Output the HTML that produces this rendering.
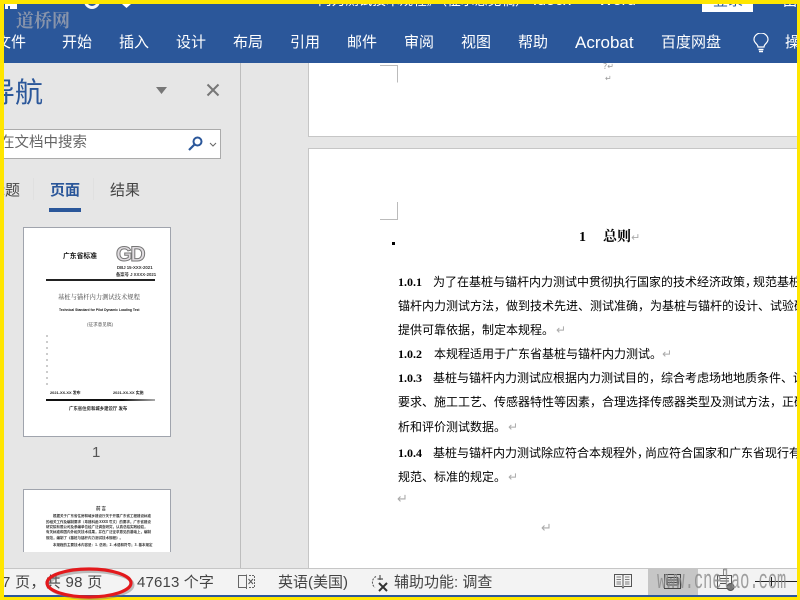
<!DOCTYPE html>
<html><head><meta charset="utf-8">
<style>
html,body{margin:0;padding:0;width:800px;height:600px;overflow:hidden;background:#fff}
#r{position:relative;width:800px;height:600px;overflow:hidden;font-family:"Liberation Sans","Noto Sans CJK SC",sans-serif}
#r div{position:absolute;white-space:nowrap}
.tab{color:#fff;font-size:15px;top:34px;line-height:18px}
.d{font-family:"Liberation Serif","WenQuanYi Zen Hei","Noto Sans CJK SC",sans-serif;font-size:12px;line-height:16px;color:#000;left:398px}
.d b{font-family:"Liberation Serif",serif;font-size:12px}
.n{letter-spacing:-4px}
.pm{color:#aaa;font-size:12px;font-family:"DejaVu Sans",sans-serif}
.st{font-size:15px;color:#444;top:574px;line-height:18px}
.l2 div{left:22px;font-size:3.500px;line-height:6px;font-weight:bold;color:#333}
.mk{left:22px;width:2px;height:2px;background:#ccc}
</style></head><body><div id="r">
<!-- ribbon -->
<div style="left:0;top:0;width:800px;height:63px;background:#2b579a"></div>
<!-- panels -->
<div style="left:0;top:63px;width:309px;height:506px;background:#e6e6e6"></div>
<div style="left:240px;top:63px;width:1px;height:506px;background:#bdbdbd"></div>
<div style="left:308px;top:63px;width:1px;height:74px;background:#c6c6c6"></div>
<div style="left:308px;top:136px;width:492px;height:1px;background:#c6c6c6"></div>
<div style="left:308px;top:137px;width:492px;height:12px;background:#e6e6e6"></div>
<div style="left:308px;top:148px;width:492px;height:1px;background:#c6c6c6"></div>
<div style="left:308px;top:148px;width:1px;height:421px;background:#c6c6c6"></div>

<!-- title bar -->
<div style="left:5px;top:4px;width:12px;height:5px;background:#fff"></div>
<div style="left:8px;top:6px;width:2px;height:3px;background:#2b579a"></div>
<div style="left:84px;top:-7px;width:10px;height:10px;border:3px solid #fff;border-radius:50%;opacity:.95"></div>
<svg style="position:absolute;left:122px;top:4px" width="10" height="5"><path d="M0 0H9L4.500 4Z" fill="#fff"/></svg>
<div style="left:318px;top:-8px;color:#fff;font-size:13.600px;line-height:18px">内力测试技术规程》（征求意见稿）<span style="margin-left:4px;font-size:16px">.docx</span><span style="margin-left:27px;font-size:16px">Word</span></div>
<div style="left:702px;top:0;width:51px;height:12px;background:#fff;overflow:hidden"><div style="left:11px;top:-8px;color:#2b579a;font-size:15px;line-height:18px">登录</div></div>
<div style="left:783px;top:-8px;color:#fff;font-size:14px;line-height:18px">田</div>
<div style="left:16px;top:8px;font-family:'Noto Serif CJK SC',serif;font-weight:bold;font-size:18px;line-height:24px;color:#8894ab">道桥网</div>

<!-- tabs -->
<div class="tab" style="left:-4px">文件</div>
<div class="tab" style="left:62px">开始</div>
<div class="tab" style="left:119px">插入</div>
<div class="tab" style="left:176px">设计</div>
<div class="tab" style="left:233px">布局</div>
<div class="tab" style="left:290px">引用</div>
<div class="tab" style="left:347px">邮件</div>
<div class="tab" style="left:404px">审阅</div>
<div class="tab" style="left:461px">视图</div>
<div class="tab" style="left:518px">帮助</div>
<div class="tab" style="left:575px;font-size:17px">Acrobat</div>
<div class="tab" style="left:661px">百度网盘</div>
<svg style="position:absolute;left:752px;top:33px" width="18" height="22" fill="none" stroke="#fff" stroke-width="1.200"><path d="M6 14C6 11 2 10 2 6.500A6.800 6.300 0 0 1 16 6.500C16 10 12 11 12 14Z"/><path d="M6.500 16.500H11.500M7 18.500H11" stroke-width="1.400"/></svg>
<div class="tab" style="left:785px">操作</div>

<!-- nav pane -->
<div style="left:-13px;top:77px;font-size:28px;line-height:32px;color:#2b579a">导航</div>
<svg style="position:absolute;left:155px;top:87px" width="13" height="8"><path d="M1 0H12L6.500 7Z" fill="#777"/></svg>
<svg style="position:absolute;left:206px;top:83px" width="14" height="14" stroke="#777" stroke-width="2"><path d="M1.500 1.500L12.500 12.500M12.500 1.500L1.500 12.500"/></svg>
<div style="left:0;top:129px;width:219px;height:28px;background:#fff;border:1px solid #ababab"></div>
<div style="left:0;top:133px;font-size:14.500px;line-height:20px;color:#666">在文档中搜索</div>
<svg style="position:absolute;left:187px;top:135px" width="17" height="17" fill="none" stroke="#2b579a"><circle cx="10.500" cy="6.500" r="4" stroke-width="2"/><path d="M7.500 9.500L2 15" stroke-width="2.200"/></svg>
<svg style="position:absolute;left:209px;top:142px" width="8" height="5" fill="none" stroke="#666"><path d="M1 1L4 4L7 1"/></svg>
<div style="left:-10px;top:182px;font-size:15px;line-height:18px;color:#444">标题</div>
<div style="left:50px;top:182px;font-size:15px;line-height:18px;color:#2b579a;font-weight:bold">页面</div>
<div style="left:110px;top:182px;font-size:15px;line-height:18px;color:#444">结果</div>
<div style="left:49px;top:208px;width:32px;height:4px;background:#2b579a"></div>
<div style="left:33px;top:178px;width:1px;height:22px;background:#e0e0e0"></div>
<div style="left:93px;top:178px;width:1px;height:22px;background:#e0e0e0"></div>

<!-- thumbnail 1 -->
<div style="left:23px;top:227px;width:146px;height:208px;background:#fff;border:1px solid #a0a4ad;overflow:hidden">
 <div style="left:0;top:0;width:146px;height:208px;filter:blur(.35px)">
  <div style="left:39px;top:22px;font-size:6.800px;line-height:10px;color:#111;font-weight:bold;font-family:'Noto Sans CJK SC',sans-serif">广东省标准</div>
  <div style="left:92px;top:15px;font-size:21px;line-height:24px;font-weight:bold;color:#e0dce0;-webkit-text-stroke:1px #777;letter-spacing:-2px">GD</div>
  <div style="left:93px;top:37px;font-size:4.300px;line-height:6px;color:#333;font-weight:bold">DBJ 15-XXX-2021</div>
  <div style="left:92px;top:44px;font-size:4.300px;line-height:6px;color:#333;font-weight:bold">备案号 J XXXX-2021</div>
  <div style="left:22px;top:51px;width:109px;height:2px;background:#222"></div>
  <div style="left:34px;top:64px;font-size:6.300px;line-height:10px;color:#444;font-family:'Noto Serif CJK SC',serif">基桩与锚杆内力测试技术规程</div>
  <div style="left:35px;top:79px;font-size:3.350px;line-height:7px;color:#111;font-weight:bold">Technical Standard for Pilot Dynamic Loading Test</div>
  <div style="left:63px;top:93px;font-size:4.600px;line-height:8px;color:#555">(征求意见稿)</div>
  <div class="mk" style="top:107px"></div><div class="mk" style="top:113px"></div><div class="mk" style="top:119px"></div><div class="mk" style="top:125px"></div><div class="mk" style="top:131px"></div><div class="mk" style="top:137px"></div><div class="mk" style="top:143px"></div><div class="mk" style="top:149px"></div><div class="mk" style="top:155px"></div>
  <div style="left:26px;top:162px;font-size:3.900px;line-height:6px;color:#222;font-weight:bold">2021-XX-XX 发布</div>
  <div style="left:89px;top:162px;font-size:3.900px;line-height:6px;color:#222;font-weight:bold">2021-XX-XX 实施</div>
  <div style="left:22px;top:171px;width:109px;height:2px;background:linear-gradient(90deg,#111 70%,#aaa)"></div>
  <div style="left:45px;top:177px;font-size:4.400px;line-height:7px;color:#222;font-weight:bold">广东省住房和城乡建设厅  发布</div>
 </div>
</div>
<div style="left:92px;top:444px;font-size:15px;line-height:18px;color:#555">1</div>
<!-- thumbnail 2 -->
<div style="left:23px;top:489px;width:146px;height:62px;background:#fff;border:1px solid #a0a4ad;border-bottom:0;overflow:hidden;font-family:'Noto Sans CJK SC',sans-serif">
 <div class="l2" style="left:0;top:0;width:146px;height:62px;filter:blur(.3px)">
  <div style="left:72px;top:16px;font-size:4.500px">前 言</div>
  <div style="left:29px;top:24px">根据关于广东省住房和城乡建设厅关于开展广东省工程建设标准</div>
  <div style="top:30px">的相关工作及编制要求（粤建科函 XXXX 号文）的要求，广东省建设</div>
  <div style="top:35px">研究院有限公司及参编单位经广泛调查研究，认真总结实践经验，</div>
  <div style="top:40px">有关标准和国内外相关技术成果，并在广泛征求意见的基础上，编制</div>
  <div style="top:46px">规范，编制了《基桩与锚杆内力测试技术规程》。</div>
  <div style="left:29px;top:53px">本规程的主要技术内容是：1. 总则；2. 术语和符号；3. 基本规定</div>
 </div>
</div>

<!-- doc -->
<svg style="position:absolute;left:380px;top:63px" width="19" height="20" fill="none" stroke="#bbb"><path d="M0 2.500H17.500V19.500"/></svg>
<div class="pm" style="left:603px;top:62px;font-size:8px;line-height:10px;color:#999">?↵</div>
<div class="pm" style="left:605px;top:74px;font-size:8px;line-height:10px;color:#999">↵</div>
<svg style="position:absolute;left:380px;top:202px" width="19" height="18" fill="none" stroke="#bbb"><path d="M17.500 0V17.500H0"/></svg>
<div style="left:392px;top:242px;width:3px;height:3px;background:#000"></div>
<div class="d" style="left:579px;top:229px;font-size:14px;line-height:18px;font-weight:bold;font-family:'Liberation Serif','Noto Serif CJK SC',serif;color:#000">1<span style="margin-left:17px">总则</span><span class="pm" style="font-weight:normal;font-size:11px">↵</span></div>
<div class="d" style="top:274px"><b>1.0.1</b><span style="margin-left:11px">为了在基桩与锚杆内力测试中贯彻执行国家的技术经济政策<span class="n">，</span>规范基桩与</span></div>
<div class="d" style="top:298px">锚杆内力测试方法，做到技术先进、测试准确，为基桩与锚杆的设计、试验研究</div>
<div class="d" style="top:322px">提供可靠依据，制定本规程。<span class="pm" style="margin-left:2px">↵</span></div>
<div class="d" style="top:346px"><b>1.0.2</b><span style="margin-left:12px">本规程适用于广东省基桩与锚杆内力测试。</span><span class="pm">↵</span></div>
<div class="d" style="top:370px"><b>1.0.3</b><span style="margin-left:11px">基桩与锚杆内力测试应根据内力测试目的，综合考虑场地地质条件、设计</span></div>
<div class="d" style="top:394px">要求、施工工艺、传感器特性等因素，合理选择传感器类型及测试方法，正确分</div>
<div class="d" style="top:419px">析和评价测试数据。<span class="pm" style="margin-left:2px">↵</span></div>
<div class="d" style="top:445px"><b>1.0.4</b><span style="margin-left:11px">基桩与锚杆内力测试除应符合本规程外<span class="n">，</span>尚应符合国家和广东省现行有关</span></div>
<div class="d" style="top:469px">规范、标准的规定。<span class="pm" style="margin-left:2px">↵</span></div>
<div class="pm" style="left:397px;top:493px;font-size:13px;line-height:14px">↵</div>
<div class="pm" style="left:541px;top:522px;font-size:13px;line-height:14px">↵</div>

<!-- status bar -->
<div style="left:0;top:568px;width:800px;height:1px;background:#c6c6c6"></div>
<div style="left:0;top:569px;width:800px;height:26px;background:#f3f3f3"></div>
<div style="left:0;top:595px;width:800px;height:2px;background:#2b579a"></div>
<div class="st" style="left:2px;letter-spacing:.3px">7 页，共 98 页</div>
<div class="st" style="left:137px;letter-spacing:.15px">47613 个字</div>
<svg style="position:absolute;left:238px;top:574px" width="18" height="16" fill="none" stroke="#666"><path d="M8.500 1.500H.500V13.500H8.500M8.500 .5V15"/><path d="M11 1.500H16.500V13.500H11" stroke-dasharray="2 1"/><path d="M10.500 5L15 10M15 5L10.500 10" stroke="#555"/></svg>
<div class="st" style="left:278px">英语(美国)</div>
<svg style="position:absolute;left:371px;top:574px" width="20" height="20" fill="none" stroke="#555"><path d="M5 2.500A6.500 6.500 0 0 0 4 13.500" stroke-dasharray="2 1.200"/><path d="M9 1V6M6.500 5H12" stroke-width="1.200"/><path d="M8 9L16 17M16 9L8 17" stroke="#333" stroke-width="2"/></svg>
<div class="st" style="left:394px">辅助功能: 调查</div>
<svg style="position:absolute;left:613px;top:573px" width="20" height="17" fill="none" stroke="#555"><path d="M1.500 1.500H9.500L10 2.500L10.500 1.500H18.500V13.500H11L10 15L9 13.500H1.500ZM10 2.500V13"/><path d="M3.500 4H8M3.500 6.500H8M3.500 9H8M3.500 11H8M12 4H16.500M12 6.500H16.500M12 9H16.500M12 11H16.500" stroke-width=".8"/></svg>
<div style="left:648px;top:569px;width:50px;height:26px;background:#c6c6c6"></div>
<svg style="position:absolute;left:664px;top:574px" width="18" height="16" fill="none" stroke="#444"><path d="M.500 .500H16.500V14.500H.500ZM3 3.500H14M3 6H14M3 8.500H14M3 11H14M3 3.500V11M14 3.500V11"/></svg>
<svg style="position:absolute;left:716px;top:574px" width="20" height="18" fill="none" stroke="#555"><path d="M1.500 1.500H15.500V14.500H1.500ZM4 4.500H13M4 7H13M4 9.500H10"/><circle cx="14.500" cy="13" r="3.500" fill="#777"/></svg>
<div style="left:723px;top:569px;width:1px;height:6px;background:#888"></div>
<div style="left:755px;top:581px;width:45px;height:1px;background:#222"></div>
<div style="left:771px;top:577px;width:1px;height:9px;background:#222"></div>
<div style="left:657px;top:568px;font-family:'Liberation Mono',monospace;font-size:27px;line-height:28px;color:#8a8a8a;opacity:.8;transform:scaleX(.57);transform-origin:0 0">www.cnelao.com</div>

<!-- yellow frame -->
<div style="left:0;top:0;width:800px;height:4px;background:#ffe600"></div>
<div style="left:0;top:597px;width:800px;height:3px;background:#ffe600"></div>
<div style="left:0;top:0;width:4px;height:600px;background:#ffe600"></div>
<div style="left:797px;top:0;width:3px;height:600px;background:#ffe600"></div>

<!-- red ellipse -->
<svg style="position:absolute;left:40px;top:562px" width="100" height="38"><ellipse cx="51" cy="23" rx="42" ry="13.500" fill="none" stroke="#777" stroke-width="3" opacity=".45"/><ellipse cx="49" cy="21" rx="42" ry="14" fill="none" stroke="#e3191c" stroke-width="3.200"/></svg>
</div></body></html>
